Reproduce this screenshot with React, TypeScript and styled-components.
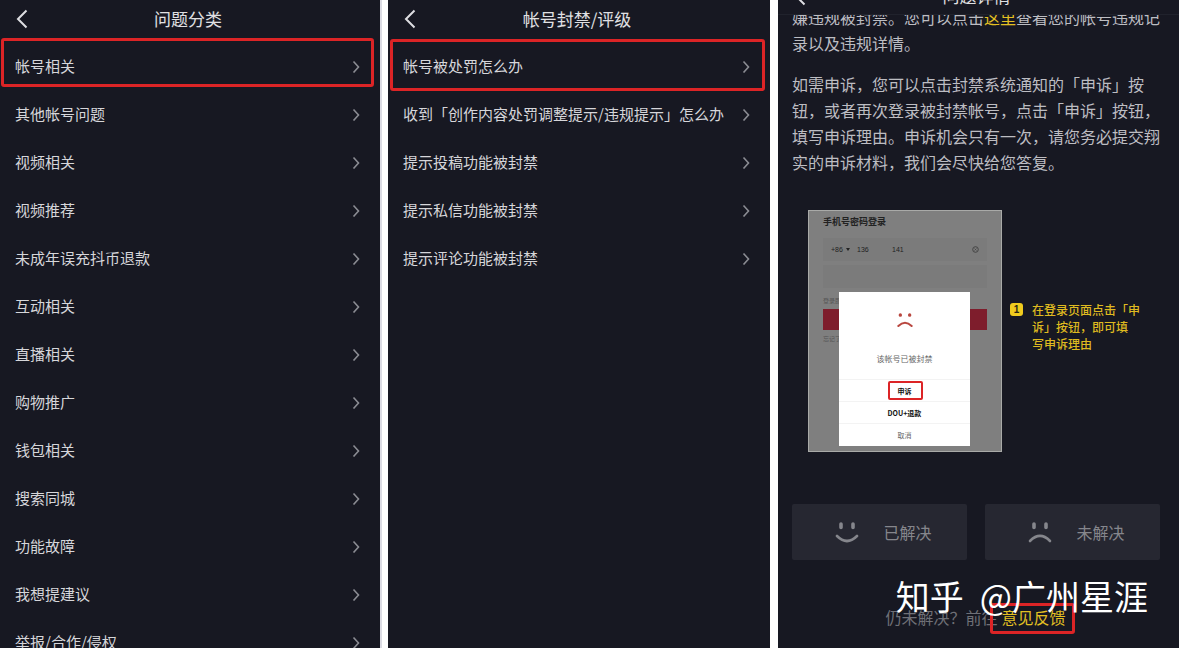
import React from "react";
import styled, { createGlobalStyle, css } from "styled-components";

const GlobalStyle = createGlobalStyle`
  * { box-sizing: border-box; }
  body {
    margin: 0;
    background: #fff;
    font-family: "Noto Sans CJK SC", "Noto Sans", sans-serif;
    color: #d6d6da;
  }
  button, input, select { font: inherit; color: inherit; margin: 0; padding: 0; border: 0; background: none; }
  ul { list-style: none; margin: 0; padding: 0; }
  p, h1, h2, h3, figure { margin: 0; font-weight: 400; }
  a { text-decoration: none; color: inherit; }
`;

const Page = styled.main`
  display: grid;
  grid-template-columns: 380fr 382fr 401fr;
  gap: 8px;
  height: 100vh;
  overflow: hidden;
`;

const Panel = styled.section<{ $edge?: boolean }>`
  min-width: 0;
  overflow: hidden;
  background: #171822;
  ${(p) => p.$edge && css`box-shadow: 2px 0 #dbdbe3;`}
`;

const Header = styled.header<{ $scrolled?: boolean }>`
  display: flex;
  align-items: center;
  height: 38px;
  padding-right: 48px;
  ${(p) =>
    p.$scrolled &&
    css`
      margin-top: -23px;
      border-bottom: 1px solid #20222c;
    `}
`;

const BackButton = styled.button`
  display: flex;
  align-items: center;
  width: 44px;
  height: 38px;
  padding-left: 15px;
`;

const Title = styled.h1`
  flex: 1;
  text-align: center;
  font-size: 17px;
  line-height: 38px;
  color: #e0e0e3;
`;

const List = styled.ul`
  padding-top: 4px;
`;

const Item = styled.li`
  position: relative;
`;

const ItemLink = styled.a`
  display: flex;
  align-items: center;
  justify-content: space-between;
  height: 48px;
  padding: 0 20px 0 15px;
  font-size: 15px;
  white-space: nowrap;
`;

const ItemLabel = styled.span`
  padding-bottom: 2px;
`;

const Marker = styled.span<{ $tall?: boolean }>`
  position: absolute;
  inset: ${(p) => (p.$tall ? "-3px 5px -1px 2px" : "-4px 6px 3px 1px")};
  border: 3px solid #dc2426;
  border-radius: 3px;
  pointer-events: none;
`;

const Article = styled.div`
  overflow: hidden;
  padding: 0 14px 16px;
`;

const Copy = styled.div`
  display: flex;
  flex-direction: column;
  gap: 15px;
  margin-top: -11px;
  font-size: 16px;
  line-height: 26px;
  color: #bdbdc2;
  white-space: nowrap;
`;

const YellowLink = styled.a`
  color: #e3c023;
`;

const Guide = styled.figure`
  display: flex;
  align-items: flex-start;
  margin: 35px 0 0 16px;
`;

const Phone = styled.div`
  position: relative;
  flex: none;
  width: 194px;
  height: 242px;
  padding: 3px 14px;
  border: 1px solid #a9aaa8;
  background: #7f7f7f;
  color: #222;
`;

const PhoneTitle = styled.h2`
  margin-bottom: 8px;
  font-size: 9px;
  line-height: 16px;
  font-weight: 700;
`;

const Field = styled.div`
  display: flex;
  align-items: center;
  height: 23px;
  margin-bottom: 4px;
  padding: 0 8px;
  background: #7b7b7b;
  font: 7px "Liberation Sans", sans-serif;
`;

const CountryCode = styled.select`
  appearance: none;
  width: 15px;
`;

const PhoneInput = styled.input`
  flex: 1;
  min-width: 0;
  margin-left: 7px;
`;

const Hint = styled.p`
  font-size: 6px;
  line-height: 17px;
  color: #555;
`;

const LoginButton = styled.button`
  display: block;
  width: 100%;
  height: 21px;
  background: #7e1d2c;
`;

const Dialog = styled.div`
  position: absolute;
  left: 30px;
  top: 81px;
  display: flex;
  flex-direction: column;
  width: 131px;
  height: 154px;
  padding-bottom: 1px;
  background: #fff;
`;

const DialogBody = styled.div`
  display: flex;
  flex: 1;
  flex-direction: column;
  align-items: center;
  justify-content: space-between;
  padding: 20px 0 12px;
  font-size: 8px;
  line-height: 16px;
  color: #666;
`;

const DialogButton = styled.button<{ $quiet?: boolean }>`
  position: relative;
  height: 22px;
  border-top: 1px solid #f3f3f3;
  font-size: 7px;
  line-height: 20px;
  font-weight: ${(p) => (p.$quiet ? 400 : 700)};
  color: ${(p) => (p.$quiet ? "#666" : "#111")};
`;

const AppealMarker = styled.span`
  position: absolute;
  inset: 1px 47px 1px 49px;
  border: 2px solid #dc2426;
  border-radius: 2px;
`;

const Caption = styled.figcaption`
  display: flex;
  align-items: flex-start;
  gap: 9px;
  margin: 91px 0 0 8px;
  font-size: 12px;
  line-height: 17px;
  font-weight: 500;
  color: #dfba20;
  white-space: nowrap;
`;

const Step = styled.span`
  flex: none;
  width: 13px;
  height: 13px;
  margin-top: 2px;
  border-radius: 3px;
  background: #f0cb1e;
  font: 700 10px/13px "Liberation Sans", sans-serif;
  text-align: center;
  color: #2a2614;
`;

const Answers = styled.div`
  display: flex;
  gap: 18px;
  margin-top: 52px;
  padding-right: 5px;
`;

const Answer = styled.button`
  display: flex;
  flex: 1;
  align-items: center;
  justify-content: center;
  gap: 24px;
  height: 56px;
  padding-left: 8px;
  border-radius: 2px;
  background: #262731;
  font-size: 16px;
  color: #85868c;
`;

const Footer = styled.footer`
  position: relative;
  display: flex;
  justify-content: center;
  gap: 4px;
  margin-top: 42px;
  padding-right: 6px;
  font-size: 16px;
  line-height: 30px;
  color: #6f7077;
`;

const FeedbackLink = styled(YellowLink)`
  position: relative;
`;

const FeedbackMarker = styled.span`
  position: absolute;
  inset: 1px -9px -2px -12px;
  border: 3px solid #dc2426;
  border-radius: 3px;
`;

const Watermark = styled.span`
  position: absolute;
  right: 17px;
  top: -30px;
  display: flex;
  gap: 16px;
  font-size: 34px;
  line-height: 48px;
  color: #fff;
  white-space: nowrap;
`;

const BackIcon = () => (
  <svg width="14" height="20" viewBox="0 0 14 20" fill="none" stroke="#dedee2" strokeWidth="2" aria-hidden="true">
    <path d="M11.500 1.500 3 10l8.500 8.500" />
  </svg>
);

const ChevronIcon = () => (
  <svg width="8" height="14" viewBox="0 0 8 14" fill="none" stroke="#8b8c93" strokeWidth="1.600" aria-hidden="true">
    <path d="m1.500 2.500 5 5.500-5 5.500" />
  </svg>
);

function Face({ sad = false, size = "large" }: { sad?: boolean; size?: "large" | "small" }) {
  const small = size === "small";
  return (
    <svg
      width={small ? 16 : 24}
      height={small ? 16 : 24}
      viewBox="0 0 24 24"
      fill="none"
      stroke={small ? "#b9473f" : "#85868c"}
      strokeWidth={small ? 3 : 2.6}
      strokeLinecap="round"
      aria-hidden="true"
    >
      {small ? <path d="M5 4.500v.2M19 4.500v.2" strokeWidth="5" /> : <path d="M6 4v3.500M18 4v3.500" strokeWidth="3.600" />}
      {sad ? <path d="M2 21Q12 11 22 21" /> : <path d="M2 16Q12 26 22 16" />}
    </svg>
  );
}

const categories = [
  "帐号相关", "其他帐号问题", "视频相关", "视频推荐", "未成年误充抖币退款", "互动相关", "直播相关",
  "购物推广", "钱包相关", "搜索同城", "功能故障", "我想提建议", "举报/合作/侵权",
];

const banTopics = [
  "帐号被处罚怎么办", "收到「创作内容处罚调整提示/违规提示」怎么办", "提示投稿功能被封禁",
  "提示私信功能被封禁", "提示评论功能被封禁",
];

function TopBar({ title, scrolled }: { title: string; scrolled?: boolean }) {
  return (
    <Header $scrolled={scrolled}>
      <BackButton aria-label="返回"><BackIcon /></BackButton>
      <Title>{title}</Title>
    </Header>
  );
}

function TopicList({ items, tallMarker }: { items: string[]; tallMarker?: boolean }) {
  return (
    <List>
      {items.map((label, i) => (
        <Item key={label}>
          <ItemLink href="#"><ItemLabel>{label}</ItemLabel><ChevronIcon /></ItemLink>
          {i === 0 && <Marker $tall={tallMarker} />}
        </Item>
      ))}
    </List>
  );
}

function LoginPreview() {
  return (
    <Phone>
      <PhoneTitle>手机号密码登录</PhoneTitle>
      <Field>
        <CountryCode aria-label="国家区号"><option>+86</option></CountryCode>
        <svg width="4" height="3" viewBox="0 0 4 3" aria-hidden="true"><path d="M0 0h4L2 3z" fill="#222" /></svg>
        <PhoneInput aria-label="手机号" defaultValue={"136" + " ".repeat(12) + "141"} />
        <svg width="7" height="7" viewBox="0 0 7 7" fill="none" stroke="#444" aria-hidden="true">
          <circle cx="3.500" cy="3.500" r="2.800" /><path d="m2.500 2.500 2 2m0-2-2 2" strokeWidth=".7" />
        </svg>
      </Field>
      <Field><PhoneInput aria-label="密码" type="password" /></Field>
      <Hint>登录即</Hint>
      <LoginButton aria-label="登录" />
      <Hint>忘记了</Hint>
      <Dialog>
        <DialogBody>
          <Face sad size="small" />
          <p>该帐号已被封禁</p>
        </DialogBody>
        <DialogButton>申诉<AppealMarker /></DialogButton>
        <DialogButton>DOU+退款</DialogButton>
        <DialogButton $quiet>取消</DialogButton>
      </Dialog>
    </Phone>
  );
}

export default function App() {
  return (
    <>
      <GlobalStyle />
      <Page lang="zh-CN">
        <Panel $edge>
          <TopBar title="问题分类" />
          <TopicList items={categories} />
        </Panel>
        <Panel>
          <TopBar title="帐号封禁/评级" />
          <TopicList items={banTopics} tallMarker />
        </Panel>
        <Panel>
          <TopBar title="问题详情" scrolled />
          <Article>
            <Copy>
              <p>
                嫌违规被封禁。您可以点击<YellowLink href="#">这里</YellowLink>查看您的帐号违规记<br />
                录以及违规详情。
              </p>
              <p>
                如需申诉，您可以点击封禁系统通知的「申诉」按<br />
                钮，或者再次登录被封禁帐号，点击「申诉」按钮，<br />
                填写申诉理由。申诉机会只有一次，请您务必提交翔<br />
                实的申诉材料，我们会尽快给您答复。
              </p>
            </Copy>
            <Guide>
              <LoginPreview />
              <Caption>
                <Step>1</Step>
                <span>在登录页面点击「申<br />诉」按钮，即可填<br />写申诉理由</span>
              </Caption>
            </Guide>
            <Answers>
              <Answer><Face />已解决</Answer>
              <Answer><Face sad />未解决</Answer>
            </Answers>
            <Footer>
              <span>仍未解决？前往</span>
              <FeedbackLink href="#">意见反馈<FeedbackMarker /></FeedbackLink>
              <Watermark><span>知乎</span><span>@广州星涯</span></Watermark>
            </Footer>
          </Article>
        </Panel>
      </Page>
    </>
  );
}
